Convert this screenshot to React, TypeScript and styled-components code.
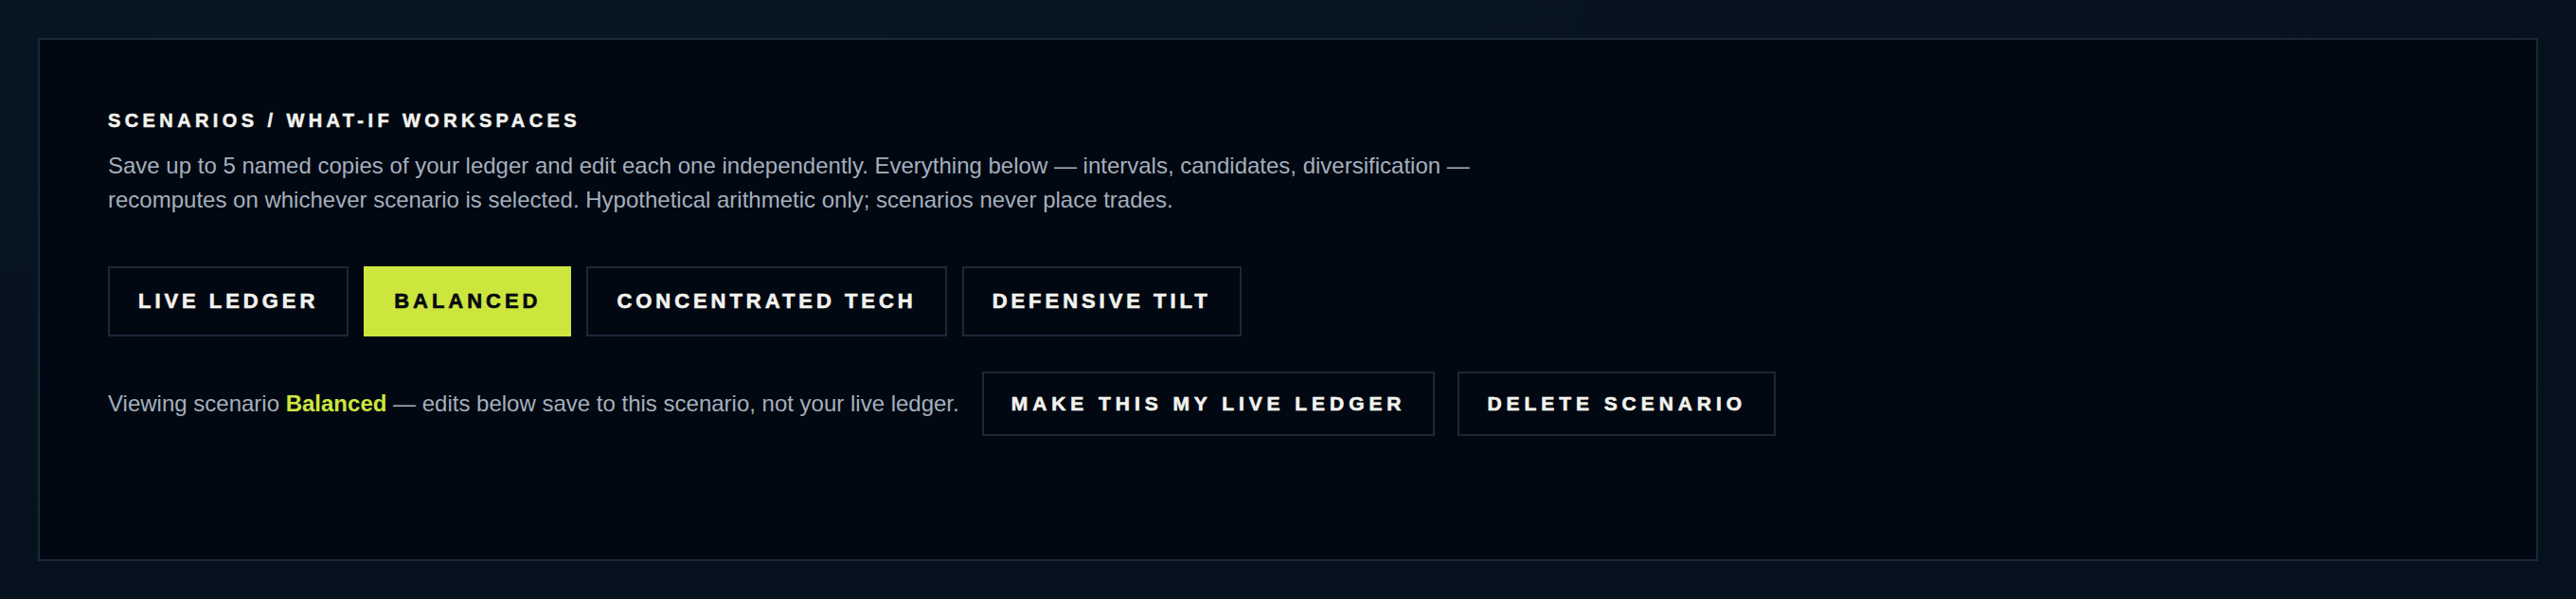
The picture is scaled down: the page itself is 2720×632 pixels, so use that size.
import { useState } from "react";
import styled, { createGlobalStyle } from "styled-components";

const GlobalStyle = createGlobalStyle`
  html, body {
    margin: 0;
    padding: 0;
    background: #06121e;
  }

  body {
    font-family: "Liberation Sans", Arial, sans-serif;
  }
`;

const Page = styled.div`
  min-height: 632px;
  box-sizing: border-box;
  padding: 40px;
  background: radial-gradient(ellipse at 20% 0%, #081624 0%, #06121e 55%, #05111d 100%);
`;

const Panel = styled.section`
  box-sizing: border-box;
  height: 552px;
  padding: 74px 72px 0;
  border: 2px solid #1b2839;
  background: #020812;
`;

const Title = styled.h2`
  margin: 0;
  font-size: 20px;
  line-height: 22px;
  font-weight: 700;
  letter-spacing: 0.22em;
  text-transform: uppercase;
  color: #f3f3ee;
  -webkit-text-stroke: 0.5px currentColor;
`;

const Intro = styled.p`
  margin: 19px 0 0;
  max-width: 1540px;
  font-size: 24px;
  line-height: 36px;
  color: #a4afbc;
`;

const Tabs = styled.div`
  display: flex;
  gap: 16px;
  margin-top: 52px;
`;

const Tab = styled.button<{ $active?: boolean }>`
  box-sizing: border-box;
  height: 74px;
  padding: 0 30px;
  border: 2px solid ${(p) => (p.$active ? "#cde63d" : "#1b2839")};
  background: ${(p) => (p.$active ? "#cde63d" : "#020812")};
  color: ${(p) => (p.$active ? "#050a10" : "#f3f3ee")};
  font-family: inherit;
  font-size: 22px;
  font-weight: 700;
  letter-spacing: 0.18em;
  text-transform: uppercase;
  -webkit-text-stroke: 0.6px currentColor;
  cursor: pointer;
`;

const Status = styled.div`
  display: flex;
  align-items: center;
  gap: 24px;
  margin-top: 37px;
`;

const StatusText = styled.span`
  font-size: 24px;
  color: #a4afbc;

  strong {
    color: #cde63d;
    font-weight: 700;
  }
`;

const ActionButton = styled.button`
  box-sizing: border-box;
  height: 68px;
  padding: 0 29px;
  border: 2px solid #1b2839;
  background: #020812;
  color: #f3f3ee;
  font-family: inherit;
  font-size: 21px;
  font-weight: 700;
  letter-spacing: 0.235em;
  text-transform: uppercase;
  -webkit-text-stroke: 0.6px currentColor;
  cursor: pointer;
`;

const scenarios = ["Live ledger", "Balanced", "Concentrated tech", "Defensive tilt"];

const App = (): JSX.Element => {
  const [selected, setSelected] = useState<string>("Balanced");

  return (
    <>
      <GlobalStyle />
      <Page>
        <Panel>
          <Title>Scenarios / What-if workspaces</Title>
          <Intro>
            Save up to 5 named copies of your ledger and edit each one independently. Everything
            below — intervals, candidates, diversification — recomputes on whichever scenario is
            selected. Hypothetical arithmetic only; scenarios never place trades.
          </Intro>

          <Tabs>
            {scenarios.map((name) => (
              <Tab key={name} $active={name === selected} onClick={() => setSelected(name)}>
                {name}
              </Tab>
            ))}
          </Tabs>

          <Status>
            <StatusText>
              Viewing scenario <strong>{selected}</strong> — edits below save to this scenario, not
              your live ledger.
            </StatusText>
            <ActionButton>Make this my live ledger</ActionButton>
            <ActionButton>Delete scenario</ActionButton>
          </Status>
        </Panel>
      </Page>
    </>
  );
};

export default App;
